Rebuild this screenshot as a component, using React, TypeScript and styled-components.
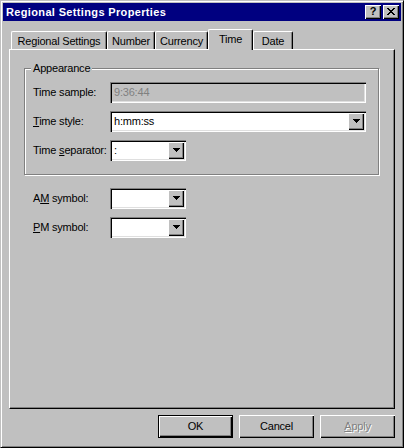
import React from "react";
import styled, { createGlobalStyle } from "styled-components";

const Global = createGlobalStyle`
  html, body { margin: 0; padding: 0; background: #c0c0c0; }
  * { box-sizing: border-box; }
`;

const raised = `inset 1px 1px #fff, inset -1px -1px #000, inset -2px -2px #808080`;
const sunken = `inset 1px 1px #808080, inset 2px 2px #000, inset -1px -1px #fff, inset -2px -2px #dfdfdf`;

const Window = styled.div`
  width: 404px;
  height: 448px;
  background: #c0c0c0;
  border: 1px solid;
  border-color: #c0c0c0 #000 #000 #c0c0c0;
  box-shadow: inset 1px 1px #fff, inset -1px -1px #808080;
  padding: 2px;
  display: flex;
  flex-direction: column;
  font-family: "Liberation Sans", Arial, sans-serif;
  font-size: 11px;
  line-height: 13px;
  letter-spacing: -0.2px;
  color: #000;
`;

const TitleBar = styled.div`
  height: 18px;
  background: #000080;
  color: #fff;
  font-weight: bold;
  letter-spacing: 0.35px;
  display: flex;
  align-items: center;
  padding: 0 2px 0 3px;
`;

const TitleText = styled.span`
  white-space: nowrap;
`;

const TitleButtons = styled.div`
  margin-left: auto;
  display: flex;
  gap: 2px;
`;

const TitleButton = styled.div`
  width: 16px;
  height: 14px;
  background: #c0c0c0;
  box-shadow: ${raised};
  display: flex;
  align-items: center;
  justify-content: center;
  color: #000;
  font-weight: bold;
  font-size: 11px;
  line-height: 11px;
  letter-spacing: 0;
  padding-bottom: 1px;
`;

const Body = styled.div`
  flex: 1;
  display: flex;
  flex-direction: column;
  padding: 8px 6px 7px;
`;

const TabStrip = styled.div`
  display: flex;
  align-items: flex-end;
  height: 20px;
  padding-left: 2px;
`;

const Tab = styled.div<{ $active?: boolean; $w: number }>`
  width: ${(p) => p.$w}px;
  height: ${(p) => (p.$active ? 21 : 18)}px;
  margin-bottom: ${(p) => (p.$active ? -1 : 0)}px;
  position: relative;
  z-index: ${(p) => (p.$active ? 1 : 0)};
  background: #c0c0c0;
  border-top: 1px solid #fff;
  border-left: 1px solid #fff;
  border-right: 1px solid #000;
  border-radius: 2px 2px 0 0;
  box-shadow: inset -1px 0 #808080;
  padding-top: 3px;
  text-align: center;
  white-space: nowrap;
`;

const Panel = styled.div`
  height: 360px;
  border: 1px solid;
  border-color: #fff #000 #000 #fff;
  box-shadow: inset -1px -1px #808080;
  padding: 18px 15px 0 14px;
`;

const GroupBox = styled.div`
  border: 1px solid #808080;
  box-shadow: inset 1px 1px #fff, 1px 1px #fff;
  height: 107px;
  padding: 0 12px 0 8px;
`;

const Legend = styled.div`
  width: fit-content;
  margin: -7px 0 0 -2px;
  padding: 0 2px;
  background: #c0c0c0;
  height: 13px;
`;

const FormGrid = styled.div<{ $top: number; $left?: number }>`
  display: grid;
  grid-template-columns: 77px auto;
  row-gap: 8px;
  margin-top: ${(p) => p.$top}px;
  margin-left: ${(p) => p.$left ?? 0}px;
  justify-items: start;
`;

const Label = styled.div`
  align-self: center;
  white-space: nowrap;
`;

const Key = styled.span`
  text-decoration: underline;
`;

const Edit = styled.div<{ $w: number; $disabled?: boolean }>`
  width: ${(p) => p.$w}px;
  height: 21px;
  background: ${(p) => (p.$disabled ? "#c0c0c0" : "#fff")};
  color: ${(p) => (p.$disabled ? "#808080" : "#000")};
  box-shadow: ${sunken};
  display: flex;
  align-items: center;
  padding: 2px 2px 2px 4px;
  white-space: nowrap;
`;

const ComboText = styled.span`
  flex: 1;
`;

const DropButton = styled.div`
  width: 16px;
  height: 17px;
  background: #c0c0c0;
  box-shadow: ${raised};
  display: flex;
  align-items: center;
  justify-content: center;
  padding-bottom: 1px;
`;

const ButtonRow = styled.div`
  display: flex;
  justify-content: flex-end;
  gap: 6px;
  margin-top: 6px;
`;

const Button = styled.div<{ $default?: boolean; $disabled?: boolean }>`
  width: 75px;
  height: 23px;
  background: #c0c0c0;
  border: ${(p) => (p.$default ? "1px solid #000" : "none")};
  box-shadow: ${raised};
  display: flex;
  align-items: center;
  justify-content: center;
  color: ${(p) => (p.$disabled ? "#808080" : "#000")};
  text-shadow: ${(p) => (p.$disabled ? "1px 1px #fff" : "none")};
`;

const Arrow = () => (
  <svg width="7" height="4" viewBox="0 0 7 4" shapeRendering="crispEdges">
    <path d="M0 0h7v1H0z M1 1h5v1H1z M2 2h3v1H2z M3 3h1v1H3z" fill="#000" />
  </svg>
);

const CloseGlyph = () => (
  <svg width="8" height="7" viewBox="0 0 8 7" shapeRendering="crispEdges">
    <path
      d="M0 0h2v1H0z M6 0h2v1H6z M1 1h2v1H1z M5 1h2v1H5z M2 2h4v1H2z M3 3h2v1H3z M2 4h4v1H2z M1 5h2v1H1z M5 5h2v1H5z M0 6h2v1H0z M6 6h2v1H6z"
      fill="#000"
    />
  </svg>
);

const Combo: React.FC<{ w: number; value?: string }> = ({ w, value }) => (
  <Edit $w={w}>
    <ComboText>{value}</ComboText>
    <DropButton>
      <Arrow />
    </DropButton>
  </Edit>
);

const tabs = [
  { label: "Regional Settings", w: 96 },
  { label: "Number", w: 48 },
  { label: "Currency", w: 53 },
  { label: "Time", w: 45, active: true },
  { label: "Date", w: 40 },
];

export default function App() {
  return (
    <>
      <Global />
      <Window>
        <TitleBar>
          <TitleText>Regional Settings Properties</TitleText>
          <TitleButtons>
            <TitleButton>?</TitleButton>
            <TitleButton>
              <CloseGlyph />
            </TitleButton>
          </TitleButtons>
        </TitleBar>
        <Body>
          <TabStrip>
            {tabs.map((t) => (
              <Tab key={t.label} $w={t.w} $active={t.active}>
                {t.label}
              </Tab>
            ))}
          </TabStrip>
          <Panel>
            <GroupBox>
              <Legend>Appearance</Legend>
              <FormGrid $top={7}>
                <Label>Time sample:</Label>
                <Edit $w={256} $disabled>
                  9:36:44
                </Edit>
                <Label>
                  <Key>T</Key>ime style:
                </Label>
                <Combo w={256} value="h:mm:ss" />
                <Label>
                  Time <Key>s</Key>eparator:
                </Label>
                <Combo w={76} value=":" />
              </FormGrid>
            </GroupBox>
            <FormGrid $top={13} $left={9}>
              <Label>
                A<Key>M</Key> symbol:
              </Label>
              <Combo w={76} />
              <Label>
                <Key>P</Key>M symbol:
              </Label>
              <Combo w={76} />
            </FormGrid>
          </Panel>
          <ButtonRow>
            <Button $default>OK</Button>
            <Button>Cancel</Button>
            <Button $disabled>
              <Key>A</Key>pply
            </Button>
          </ButtonRow>
        </Body>
      </Window>
    </>
  );
}
